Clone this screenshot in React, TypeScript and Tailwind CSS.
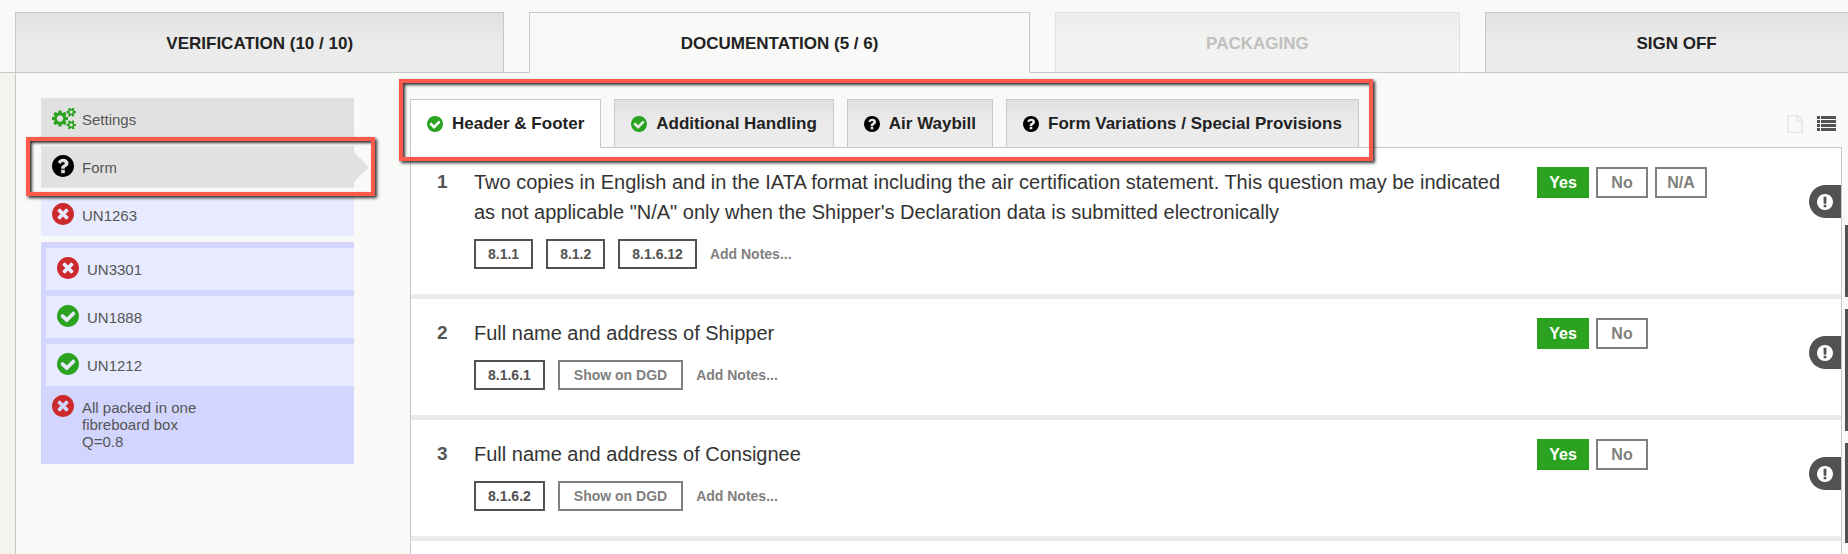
type IconName = "check" | "times" | "question" | "exclamation" | "cogs" | "file";

const CIRCLE =
  "M1664 896q0 209-103 385.5t-279.5 279.5-385.5 103-385.5-103-279.5-279.5-103-385.5 103-385.5 279.5-279.5 385.5-103 385.5 103 279.5 279.5 103 385.5z";

const SMALL_COG =
  "v140q0 16-149 31-12 27-30 52 51 113 51 138 0 4-4 7-122 71-124 71-8 0-46-47t-52-68q-20 2-30 2t-30-2q-14 21-52 68t-46 47q-2 0-124-71-4-3-4-7 0-25 51-138-18-25-30-52-149-15-149-31v-140q0-16 149-31 13-29 30-52-51-113-51-138 0-4 4-7 4-2 35-20t59-34 30-16q8 0 46 46.5t52 67.5q20-2 30-2t30 2q51-71 92-112l6-2q4 0 124 70 4 3 4 7 0 25-51 138 17 23 30 52 149 15 149 31z";

const icons: Record<IconName, { viewBox: string; d: string }> = {
  check: {
    viewBox: "128 128 1536 1536",
    d: `M1412 734q0-28-18-46l-91-90q-19-19-45-19t-45 19l-408 407-226-226q-19-19-45-19t-45 19l-91 90q-18 18-18 46 0 27 18 45l362 362q19 19 45 19 27 0 46-19l543-543q18-18 18-45z${CIRCLE}`,
  },
  times: {
    viewBox: "128 128 1536 1536",
    d: `M1277 1122q0-26-19-45l-181-181 181-181q19-19 19-45 0-27-19-46l-90-90q-19-19-46-19-26 0-45 19l-181 181-181-181q-19-19-45-19-27 0-46 19l-90 90q-19 19-19 46 0 26 19 45l181 181-181 181q-19 19-19 45 0 27 19 46l90 90q19 19 46 19 26 0 45-19l181-181 181 181q19 19 45 19 27 0 46-19l90-90q19-19 19-46z${CIRCLE}`,
  },
  question: {
    viewBox: "128 128 1536 1536",
    d: `M1024 1376v-192q0-14-9-23t-23-9h-192q-14 0-23 9t-9 23v192q0 14 9 23t23 9h192q14 0 23-9t9-23zm256-672q0-88-55.5-163t-138.5-116-170-41q-243 0-371 213-15 24 8 42l132 100q7 6 19 6 16 0 25-12 53-68 86-92 34-24 86-24 48 0 85.5 26t37.5 59q0 38-20 61t-68 45q-63 28-115.5 86.5t-52.5 125.5v36q0 14 9 23t23 9h192q14 0 23-9t9-23q0-19 21.5-49.5t54.5-49.5q32-18 49-28.5t46-35 44.5-48 28-60.5 12.5-81z${CIRCLE}`,
  },
  exclamation: {
    viewBox: "128 128 1536 1536",
    d: `${CIRCLE}M1024 1375v-190q0-14-9-23.5t-22-9.5h-192q-13 0-23 10t-10 23v190q0 13 10 23t23 10h192q13 0 22-9.5t9-23.5zm-2-344l18-621q0-12-10-18-10-8-24-8h-220q-14 0-24 8-10 6-10 18l17 621q0 10 10 17.5t24 7.5h185q14 0 23.5-7.5t10.5-17.5z`,
  },
  cogs: {
    viewBox: "-64 64 1920 1664",
    d: `M832 896q0-106-75-181t-181-75-181 75-75 181 75 181 181 75 181-75 75-181zm768 512q0-52-38-90t-90-38-90 38-38 90q0 53 37.5 90.5t90.5 37.5 90.5-37.5 37.5-90.5zm0-1024q0-52-38-90t-90-38-90 38-38 90q0 53 37.5 90.5t90.5 37.5 90.5-37.5 37.5-90.5zm-384 421v185q0 10-7 19.5t-16 10.5l-155 24q-11 35-32 76 34 48 90 115 7 11 7 20 0 12-7 19-23 30-82.5 89.5t-78.5 59.5q-11 0-21-7l-115-90q-37 19-77 31-11 108-23 155-7 24-30 24h-186q-11 0-20-7.5t-10-17.5l-23-153q-34-10-75-31l-118 89q-7 7-20 7-11 0-21-8-144-133-144-160 0-9 7-19 10-14 41-53t47-61q-23-44-35-82l-152-24q-10-1-17-9.5t-7-19.5v-185q0-10 7-19.5t16-10.5l155-24q11-35 32-76-34-48-90-115-7-11-7-20 0-12 7-20 22-30 82-89t79-59q11 0 21 7l115 90q34-18 77-32 11-108 23-154 7-24 30-24h186q11 0 20 7.5t10 17.5l23 153q34 10 75 31l118-89q8-7 20-7 11 0 21 8 144 133 144 160 0 8-7 19-12 16-42 54t-45 60q23 48 34 82l152 23q10 2 17 10.5t7 19.5zm640 533${SMALL_COG}m0-1024${SMALL_COG}`,
  },
  file: {
    viewBox: "128 0 1536 1792",
    d: "M1596 380q28 28 48 76t20 88v1152q0 40-28 68t-68 28h-1344q-40 0-68-28t-28-68v-1600q0-40 28-68t68-28h896q40 0 88 20t76 48zm-444-244v376h376q-10-29-22-41l-313-313q-12-12-41-22zm384 1528v-1024h-416q-40 0-68-28t-28-68v-416h-768v1536h1280z",
  },
};

function Icon({ name, className }: { name: IconName; className: string }) {
  return (
    <svg viewBox={icons[name].viewBox} fill="currentColor" fillRule="evenodd" aria-hidden="true" className={`shrink-0 ${className}`}>
      <path d={icons[name].d} />
    </svg>
  );
}

const iconColor: Record<string, string> = {
  check: "text-[#2ba321]",
  times: "text-[#cc292c]",
  question: "text-black",
  cogs: "text-[#2ba321]",
};

const stages = [
  { label: "VERIFICATION (10 / 10)", state: "idle" },
  { label: "DOCUMENTATION (5 / 6)", state: "active" },
  { label: "PACKAGING", state: "disabled" },
  { label: "SIGN OFF", state: "idle" },
];

const stageStyle: Record<string, string> = {
  idle: "border-[#c8c8c8] bg-linear-to-b from-[#e1e1e1] to-[#ebebeb] to-50% text-[#222]",
  active: "border-[#c8c8c8] border-b-[#f9f9f7] bg-[#f9f9f7] text-[#222]",
  disabled: "border-[#e1e1df] border-b-[#c8c8c8] bg-linear-to-b from-[#ededeb] to-[#f2f2f0] to-50% text-[#c0c0bf]",
};

const sections: { label: string; icon: IconName }[] = [
  { label: "Header & Footer", icon: "check" },
  { label: "Additional Handling", icon: "check" },
  { label: "Air Waybill", icon: "question" },
  { label: "Form Variations / Special Provisions", icon: "question" },
];

const packed: { label: string; icon: IconName }[] = [
  { label: "UN3301", icon: "times" },
  { label: "UN1888", icon: "check" },
  { label: "UN1212", icon: "check" },
];

const questions = [
  {
    text: 'Two copies in English and in the IATA format including the air certification statement. This question may be indicated as not applicable "N/A" only when the Shipper\'s Declaration data is submitted electronically',
    refs: ["8.1.1", "8.1.2", "8.1.6.12"],
    dgd: false,
    answers: ["Yes", "No", "N/A"],
  },
  {
    text: "Full name and address of Shipper",
    refs: ["8.1.6.1"],
    dgd: true,
    answers: ["Yes", "No"],
  },
  {
    text: "Full name and address of Consignee",
    refs: ["8.1.6.2"],
    dgd: true,
    answers: ["Yes", "No"],
  },
];

function SideItem({ label, icon, className }: { label: string; icon: IconName; className: string }) {
  return (
    <a href="#" className={`flex h-[42px] items-center pt-[2px] pl-[11px] ${className}`}>
      <span className="flex w-[30px] pb-1">
        <Icon name={icon} className={`${icon === "cogs" ? "h-[21px] w-6" : "size-[22px]"} ${iconColor[icon]}`} />
      </span>
      {label}
    </a>
  );
}

function Highlight({ className }: { className: string }) {
  return (
    <div
      className={`pointer-events-none absolute z-10 border-4 border-[#fd5a4b] shadow-[2px_2px_3px_#333,inset_2px_2px_3px_#333] ${className}`}
    />
  );
}

function Question({ number, item }: { number: number; item: (typeof questions)[number] }) {
  return (
    <li className="flex items-start border-b-5 border-[#ebebeb] pt-[19px]">
      <span className="w-[63px] shrink-0 pl-[26px] text-[19px] leading-[30px] font-bold text-[#555]">{number}</span>
      <div className="min-w-0 flex-1 pr-6 pb-[25px]">
        <p className="text-xl leading-[30px] text-[#333]">{item.text}</p>
        <div className="mt-3 flex items-center gap-[13px] text-sm font-bold text-[#808080]">
          {item.refs.map((ref) => (
            <button key={ref} className="h-[30px] border-2 border-[#525252] px-3 text-[#525252]">
              {ref}
            </button>
          ))}
          {item.dgd && <button className="h-[30px] border-2 border-[#808080] px-[14px]">Show on DGD</button>}
          <button>Add Notes...</button>
        </div>
      </div>
      <div className="flex w-[304px] shrink-0 items-start gap-[7px] text-base font-bold">
        {item.answers.map((answer) => (
          <button
            key={answer}
            className={`h-[31px] w-[52px] border-2 ${
              answer === "Yes" ? "border-[#2ba321] bg-[#2ba321] text-white" : "border-[#808080] text-[#808080]"
            }`}
          >
            {answer}
          </button>
        ))}
        <button aria-label="Details" className="mt-[18px] ml-auto flex h-[33px] w-8 items-center rounded-l-full bg-[#525252] pl-2 text-white">
          <Icon name="exclamation" className="size-4" />
        </button>
      </div>
    </li>
  );
}

export default function App() {
  return (
    <div className="min-h-screen overflow-hidden bg-[#f4f3ee] font-['Liberation_Sans',Arial,sans-serif]">
      <nav className="border-b border-[#c8c8c8] bg-[#f9f9f7] pt-3 pl-[15px]">
        <div className="-mr-5 -mb-px flex gap-[25px]">
          {stages.map((stage) => (
            <button
              key={stage.label}
              disabled={stage.state === "disabled"}
              className={`h-[61px] flex-auto border pt-[2px] text-[17px] font-bold ${stageStyle[stage.state]}`}
            >
              {stage.label}
            </button>
          ))}
        </div>
      </nav>

      <div className="ml-[15px] flex min-h-[481px] items-stretch border-l border-[#c8c8c8] bg-[#f9f9f7]">
        <aside className="ml-[25px] w-[313px] shrink-0 pt-[25px] text-[15px] text-[#555]">
          <div className="flex flex-col gap-[6px]">
            <SideItem label="Settings" icon="cogs" className="bg-[#e1e1e1]" />
            <div className="relative">
              <SideItem label="Form" icon="question" className="bg-[#e1e1e1]" />
              <svg viewBox="0 0 15 30" className="absolute top-[6px] left-full h-[30px] w-[15px]" fill="#e1e1e1" aria-hidden="true">
                <path d="M0 0l15 15-15 15z" />
              </svg>
              <Highlight className="-top-[9px] -right-[21px] -bottom-2 -left-[15px]" />
            </div>
            <SideItem label="UN1263" icon="times" className="bg-[#e8ebff]" />
            <div className="bg-[#d2d5fe] pt-[6px]">
              <div className="flex flex-col gap-[6px] pl-[5px]">
                {packed.map((item) => (
                  <SideItem key={item.label} label={item.label} icon={item.icon} className="bg-[#e8ebff]" />
                ))}
              </div>
              <a href="#" className="flex gap-2 pt-[9px] pb-[14px] pl-[11px]">
                <Icon name="times" className={`size-[22px] ${iconColor.times}`} />
                <span className="w-32 pt-1 leading-[17px]">All packed in one fibreboard box Q=0.8</span>
              </a>
            </div>
          </div>
        </aside>

        <main className="ml-14 flex min-w-0 flex-1 flex-col pt-[26px]">
          <div className="relative z-10 -mb-px flex items-stretch justify-between pr-3">
            <div className="relative flex gap-[13px]">
              {sections.map((section, i) => (
                <button
                  key={section.label}
                  className={`flex h-[49px] items-center gap-[9px] border border-[#c8c8c8] px-4 text-[17px] font-bold text-[#222] ${
                    i === 0 ? "border-b-white bg-white" : "bg-linear-to-b from-[#e1e1e1] to-[#ebebeb] to-50%"
                  }`}
                >
                  <Icon name={section.icon} className={`size-4 ${iconColor[section.icon]}`} />
                  {section.label}
                </button>
              ))}
              <Highlight className="-top-5 -right-[14px] -bottom-[13px] -left-[11px]" />
            </div>
            <div className="flex items-center gap-[14px]">
              <button aria-label="Document view" className="text-[#e4e4e2]">
                <Icon name="file" className="h-[18px] w-4" />
              </button>
              <button aria-label="List view" className="text-[#525252]">
                <svg viewBox="0 0 19 15" fill="currentColor" aria-hidden="true" className="h-[15px] w-[19px]">
                  <path d="M0 0h3v3H0zM4 0h15v3H4zM0 4h3v3H0zM4 4h15v3H4zM0 8h3v3H0zM4 8h15v3H4zM0 12h3v3H0zM4 12h15v3H4z" />
                </svg>
              </button>
            </div>
          </div>

          <div className="flex flex-1">
            <ul className="min-w-0 flex-1 border border-b-0 border-[#c8c8c8] bg-white">
              {questions.map((item, i) => (
                <Question key={item.text} number={i + 1} item={item} />
              ))}
            </ul>
            <div className="ml-[3px] flex w-[3px] flex-col gap-3 pt-[78px]">
              <div className="h-[72px] bg-[#525252]" />
              <div className="h-[122px] bg-[#525252]" />
              <div className="h-[100px] bg-[#525252]" />
            </div>
          </div>
        </main>
      </div>
    </div>
  );
}
